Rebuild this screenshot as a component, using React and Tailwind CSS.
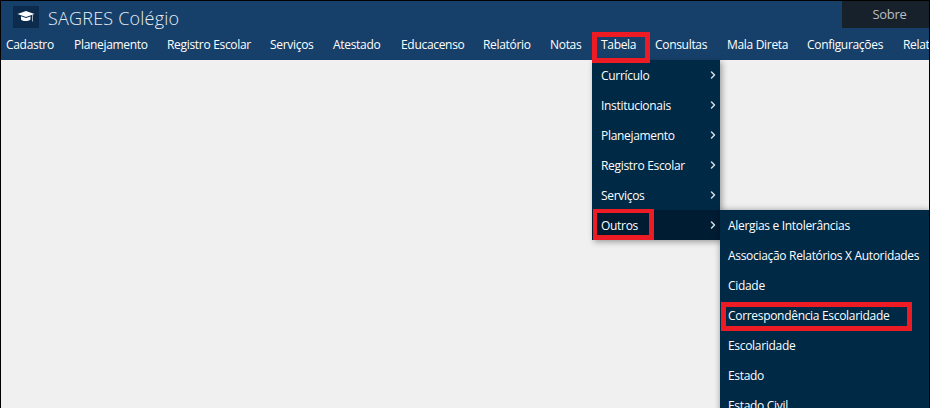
import React from 'react';
import { ChevronRight } from 'lucide-react';

const navItems = [
    ['Cadastro', 'w-[68px]'],
    ['Planejamento', 'w-[93px]'],
    ['Registro Escolar', 'w-[103px]'],
    ['Serviços', 'w-[63px]'],
    ['Atestado', 'w-[68px]'],
    ['Educacenso', 'w-[82px]'],
    ['Relatório', 'w-[67px]'],
    ['Notas', 'w-[51px]'],
    ['Tabela', 'w-[54px]'],
    ['Consultas', 'w-[72px]'],
    ['Mala Direta', 'w-[80px]'],
    ['Configurações', 'w-[96px]'],
    ['Relatórios', 'w-[70px]'],
];

const tabelaItems = ['Currículo', 'Institucionais', 'Planejamento', 'Registro Escolar', 'Serviços', 'Outros'];

const outrosItems = [
    'Alergias e Intolerâncias',
    'Associação Relatórios X Autoridades',
    'Cidade',
    'Correspondência Escolaridade',
    'Escolaridade',
    'Estado',
    'Estado Civil',
];

const App = () => {
    return (
        <div className="relative h-[408px] w-[930px] overflow-hidden border-t border-r border-l border-black bg-[#f0f0f0] text-[12px] tracking-[-0.31px] text-white [font-family:'Open_Sans',sans-serif]">
            <header className="flex h-[29px] justify-between bg-[#16406a]">
                <div className="flex items-start">
                    <div className="mt-[5px] ml-3 flex h-[22px] w-[26px] items-center justify-center bg-[#0d2c4d]">
                        <svg width="18" height="14" viewBox="0 0 18 14">
                            <path d="M9 1 L0.5 4 L9 7 L17.5 4 Z" fill="#fff" />
                            <path d="M4 6.3 V9.5 C6 11.5 11 11.5 13.5 9.5 V6.5 L9 8 Z" fill="#fff" />
                            <path d="M15.5 5 V11.5" stroke="#c8d0d8" strokeWidth="0.8" />
                        </svg>
                    </div>
                    <span className="mt-[5px] ml-[9px] text-[18px] leading-[24px] font-light tracking-[0.2px] text-[#e6edf4]">SAGRES Colégio</span>
                </div>
                <div className="flex h-[27px] w-[87px] items-center justify-center bg-[#17212b] pl-2 text-[13px] tracking-[-0.3px] text-[#b9bec4]">
                    Sobre
                </div>
            </header>

            <nav className="flex h-[30px] items-center overflow-hidden bg-[#16406a]">
                {navItems.map(([label, width]) => (
                    <div key={label} className={`shrink-0 whitespace-nowrap pl-[5px] ${width}`}>
                        {label}
                    </div>
                ))}
            </nav>

            {/* Tabela dropdown */}
            <div className="absolute left-[591px] top-[59px] w-[128px] bg-[#002946] shadow-[2px_2px_6px_rgba(0,0,0,0.35)]">
                {tabelaItems.map((item) => (
                    <div
                        key={item}
                        className={`flex h-[30px] items-center justify-between pt-[2px] pr-[1px] pl-[9px] ${item === 'Outros' ? 'bg-[#001c33]' : ''}`}
                    >
                        <span>{item}</span>
                        <ChevronRight size={12} strokeWidth={3} className="-mt-[3px] text-[#d5dde4]" />
                    </div>
                ))}
            </div>

            {/* Outros submenu */}
            <div className="absolute left-[719px] top-[209px] w-[210px] bg-[#002946] shadow-[0_0_6px_rgba(0,0,0,0.35)]">
                {outrosItems.map((item) => (
                    <div key={item} className="flex h-[30px] items-center whitespace-nowrap pt-[2px] pl-[8px]">
                        {item}
                    </div>
                ))}
            </div>

            {/* red annotation boxes */}
            <div className="absolute left-[591px] top-[31px] h-[31px] w-[58px] border-[5px] border-[#ed1c24]" />
            <div className="absolute left-[592px] top-[208px] h-[31px] w-[61px] border-t-[4px] border-r-[5px] border-b-[5px] border-l-[4px] border-[#ed1c24]" />
            <div className="absolute left-[720px] top-[301px] h-[29px] w-[191px] border-[5px] border-[#ed1c24]" />
        </div>
    );
};

export default App;
